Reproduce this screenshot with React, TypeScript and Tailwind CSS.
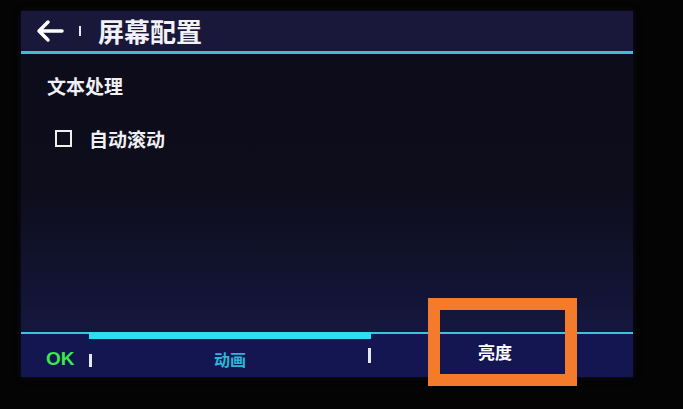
export default function App() {
  return (
    <div
      className="relative w-[683px] h-[409px] overflow-hidden bg-[#040404]"
      style={{ fontFamily: '"Noto Sans CJK SC", "Noto Sans", sans-serif' }}
    >
      <div className="absolute left-[21px] top-[11px] w-[612px] h-[366px] flex flex-col bg-[#0e0d1b] shadow-[0_0_6px_rgba(20,20,60,0.6)]">
        {/* Header */}
        <div className="h-[40px] flex items-center bg-[#19183a] pl-[15px]">
          <svg width="28" height="24" viewBox="0 0 28 24" className="text-white">
            <path d="M26 12H3M12 3L3 12l9 9" fill="none" stroke="currentColor" strokeWidth="3.5" strokeLinecap="round" strokeLinejoin="round" />
          </svg>
          <div className="ml-[15px] w-[2px] h-[10px] bg-[#e8e8f0]" />
          <span className="ml-[17px] text-[26px] leading-none font-bold text-[#f2f2f6]">屏幕配置</span>
        </div>
        <div className="h-[3px] bg-[#3bbfd6]" />

        {/* Body */}
        <div className="flex-1 flex flex-col bg-gradient-to-b from-[#0d0c1a] via-[#0e0d1c] to-[#15173f] px-[26px]">
          <div className="mt-[22px] text-[19px] leading-none font-bold text-[#f0f0f4]">文本处理</div>
          <div className="mt-[34px] flex items-center pl-[8px]">
            <div className="w-[17px] h-[17px] border-[2.5px] border-[#efefef]" />
            <span className="ml-[17px] text-[19px] leading-none font-bold text-[#f0f0f4]">自动滚动</span>
          </div>
        </div>

        {/* Tab indicator */}
        <div className="h-[7px] flex bg-[#141651]">
          <div className="w-[68px] border-t-2 border-[#3bc4dc]" />
          <div className="w-[282px] bg-[#28e0f0]" />
          <div className="flex-1 border-t-2 border-[#3bc4dc]" />
        </div>

        {/* Footer tabs */}
        <div className="h-[38px] flex items-center bg-[#141651]">
          <div className="w-[68px] flex items-center pl-[25px]">
            <span className="text-[19px] leading-none font-bold text-[#3de84b]" style={{ fontFamily: '"Liberation Sans", Arial, sans-serif' }}>OK</span>
          </div>
          <div className="w-[3px] h-[13px] bg-[#e6e6ee] mt-[4px]" />
          <div className="w-[276px] flex justify-center mt-[2px]">
            <span className="text-[16px] leading-none font-bold text-[#2bb6d8]">动画</span>
          </div>
          <div className="w-[3px] h-[15px] bg-[#e6e6ee] -mt-[6px]" />
          <div className="flex-1 flex justify-center pr-[14px] -mt-[14px]">
            <span className="text-[17px] leading-none font-bold text-white">亮度</span>
          </div>
        </div>
      </div>

      {/* Annotation box */}
      <div className="absolute left-[428px] top-[298px] w-[149px] h-[88px] border-[12px] border-[#f47b2c]" />
    </div>
  )
}
